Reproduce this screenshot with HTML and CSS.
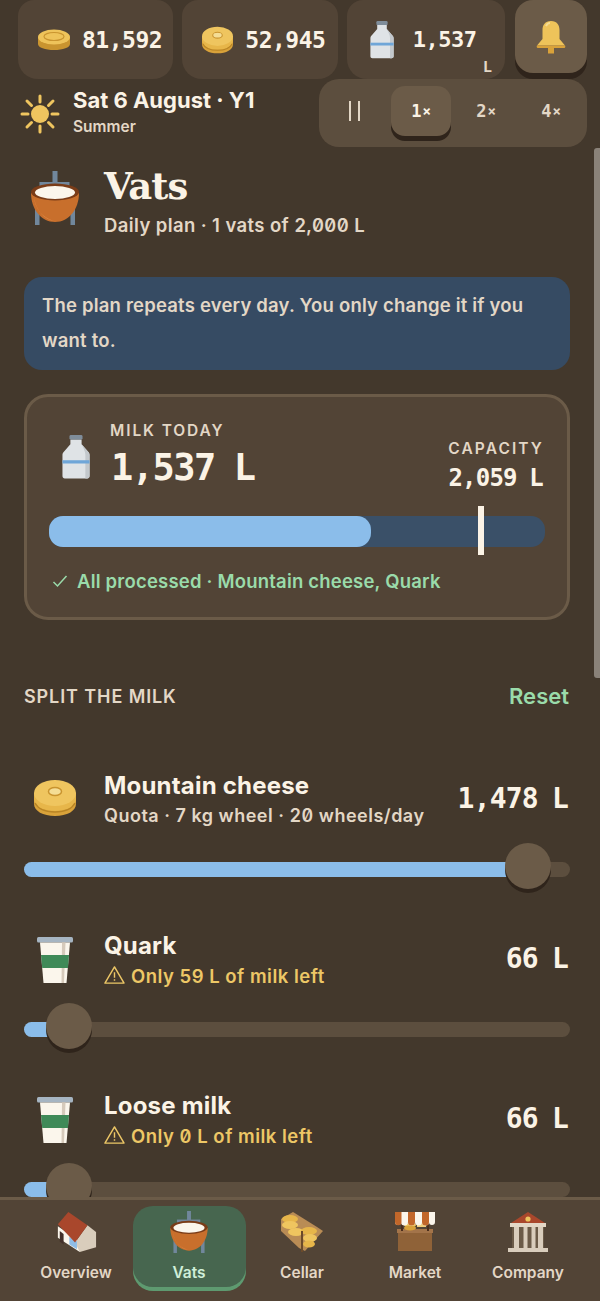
FILE: index.html
```html
<!DOCTYPE html>
<html lang="en">
<head>
<meta charset="utf-8">
<title>Vats</title>
<link rel="stylesheet" href="styles.css">
</head>
<body>
<svg class="defs" width="0" height="0" aria-hidden="true">
  <symbol id="i-coin" viewBox="0 0 32 22">
    <path d="M0 8v7c0 3.500 7 6 16 6s16-2.500 16-6V8z" fill="#c9942f"/>
    <ellipse cx="16" cy="8" rx="16" ry="7.500" fill="#eec35a"/>
    <ellipse cx="16" cy="7.500" rx="10" ry="4" fill="none" stroke="#c9942f" stroke-width="1.200"/>
  </symbol>
  <symbol id="i-cheese" viewBox="0 0 42 38">
    <path d="M0 14v11c0 7 9 12 21 12s21-5 21-12V14z" fill="#d9a23a"/>
    <path d="M0 14v6c0 7 9 12 21 12s21-5 21-12v-6z" fill="#e7b64a"/>
    <path d="M1 24c3 6 11 9 20 9s17-3 20-9" fill="none" stroke="#b98525" stroke-width="1.500"/>
    <ellipse cx="21" cy="14" rx="21" ry="13" fill="#efc55f"/>
    <ellipse cx="21" cy="12.500" rx="6.500" ry="4" fill="#f4dd95" stroke="#c9942f" stroke-width="1.500"/>
  </symbol>
  <symbol id="i-bottle" viewBox="0 0 30 48">
    <rect x="8" y="1" width="14" height="5" rx="1.500" fill="#7f8d9a"/>
    <path d="M9 6h12v5l7 8c1 1 1.500 2 1.500 3.500V45c0 1.500-1 2.500-2.500 2.500H3C1.500 47.500.5 46.500.5 45V22.500C.5 21 1 20 2 19l7-8z" fill="#dfe3e6"/>
    <path d="M21 11l7 8c1 1 1.500 2 1.500 3.500V45c0 1.500-1 2.500-2.500 2.500h-2V22c0-3-2-7-4-11z" fill="#c3c8cc"/>
    <rect x=".5" y="28" width="29" height="3.500" fill="#6fa6d8"/>
  </symbol>
  <symbol id="i-vat" viewBox="0 0 48 54">
    <rect x="21.500" y="0" width="5" height="16" fill="#71879c"/>
    <rect x="8.500" y="11" width="30" height="5" fill="#71879c"/>
    <path d="M4 30h4.500v24H4zM39.500 30H44v24h-4.500z" fill="#71879c"/>
    <path d="M0 22c0 16 10 29 24 29s24-13 24-29z" fill="#c86f2c"/>
    <path d="M3 26c1 11 7 20 20 24-9-1-18-10-20-24z" fill="#e08a46"/>
    <ellipse cx="24" cy="21" rx="24" ry="8.500" fill="#7a3c18"/>
    <ellipse cx="24" cy="21.500" rx="20" ry="6.500" fill="#fbf6ec"/>
  </symbol>
  <symbol id="i-cup" viewBox="0 0 36 46">
    <rect x="0" y="0" width="36" height="5.500" rx="1.500" fill="#a6b5c2"/>
    <path d="M3 5.500h30L29.500 46h-23z" fill="#fbf6ec"/>
    <path d="M25 5.500h3.500L27 46h-2.500z" fill="#d6cabb"/>
    <path d="M4 18h28l-1 13H5.200z" fill="#3f8a58"/>
  </symbol>
</svg>

<div class="app">
  <header class="top">
    <div class="stats">
      <div class="stat">
        <svg class="ic-coin"><use href="#i-coin"/></svg>
        <span class="stat-num">81,592</span>
      </div>
      <div class="stat">
        <svg class="ic-cheese-s"><use href="#i-cheese"/></svg>
        <span class="stat-num">52,945</span>
      </div>
      <div class="stat stat-milk">
        <svg class="ic-bottle-s"><use href="#i-bottle"/></svg>
        <span class="stat-num stat-num-s">1,537</span>
        <span class="unit">L</span>
      </div>
      <button class="bell" aria-label="Notifications">
        <svg class="ic-bell" viewBox="0 0 30 34">
          <path d="M15 1C9 1 6.500 5 6.500 10v9L1 25.500h28L23.500 19v-9C23.500 5 21 1 15 1z" fill="#eec35a"/>
          <path d="M1 25.500h28c.5 0 .5 2.500-.5 2.500h-27c-1 0-1-2.500-.5-2.500z" fill="#d9a23a"/>
          <rect x="12" y="28" width="6" height="5.500" fill="#d9a23a"/>
          <path d="M10 6c1-2 2-3 4-3" stroke="#f6dd94" stroke-width="2" fill="none"/>
        </svg>
      </button>
    </div>
    <div class="dateline">
      <div class="date">
        <svg class="ic-sun" viewBox="0 0 40 40">
          <g stroke="#efc55f" stroke-width="3" stroke-linecap="round">
            <path d="M20 2v6M20 32v6M2 20h6M32 20h6M7 7l4.500 4.500M28.500 28.500L33 33M7 33l4.500-4.500M28.500 11.500L33 7"/>
          </g>
          <circle cx="20" cy="20" r="9" fill="#efc55f"/>
        </svg>
        <div class="date-text">
          <div class="date-main">Sat 6 August · Y1</div>
          <div class="date-sub">Summer</div>
        </div>
      </div>
      <div class="speed">
        <button class="sp-btn sp-pause"><span class="pause"></span></button>
        <button class="sp-btn sp-on">1<span class="x">×</span></button>
        <button class="sp-btn sp-off">2<span class="x">×</span></button>
        <button class="sp-btn sp-off">4<span class="x">×</span></button>
      </div>
    </div>
  </header>

  <main class="main">
    <div class="head">
      <svg class="ic-vat"><use href="#i-vat"/></svg>
      <div>
        <h1 class="title">Vats</h1>
        <p class="subtitle">Daily plan · 1 vats of <span class="z">2,000</span> L</p>
      </div>
    </div>

    <div class="info">The plan repeats every day. You only change it if you want to.</div>

    <section class="card">
      <div class="card-top">
        <svg class="ic-bottle"><use href="#i-bottle"/></svg>
        <div class="today">
          <div class="lbl">MILK TODAY</div>
          <div class="big">1,537 L</div>
        </div>
        <div class="cap">
          <div class="lbl lbl-cap">CAPACITY</div>
          <div class="mid">2,059 L</div>
        </div>
      </div>
      <div class="meter">
        <div class="meter-fill" style="width:64.900%"></div>
        <div class="meter-mark"></div>
      </div>
      <div class="ok">
        <svg class="ic-check" viewBox="0 0 16 14"><path d="M1.500 8l4 4L14.500 2" fill="none" stroke="#9adbaa" stroke-width="1.500"/></svg>
        All processed · Mountain cheese, Quark
      </div>
    </section>

    <div class="split">
      <h2 class="split-t">SPLIT THE MILK</h2>
      <span class="reset">Reset</span>
    </div>

    <div class="row row-first">
      <div class="row-head">
        <svg class="ic-cheese"><use href="#i-cheese"/></svg>
        <div class="row-text">
          <div class="row-name">Mountain cheese</div>
          <div class="row-sub">Quota · 7 kg wheel · <span class="z">20</span> wheels/day</div>
        </div>
        <div class="row-val">1,478 L</div>
      </div>
      <div class="slider"><div class="fill" style="width:92%"></div><div class="thumb" style="left:88.100%"></div></div>
    </div>

    <div class="row">
      <div class="row-head">
        <svg class="ic-cup"><use href="#i-cup"/></svg>
        <div class="row-text">
          <div class="row-name">Quark</div>
          <div class="row-warn">
            <svg class="ic-warn" viewBox="0 0 22 20"><path d="M11 1.500L1 18.500h20z" fill="none" stroke="#edc766" stroke-width="1.500" stroke-linejoin="round"/><path d="M11 7v6M11 14.500v1.500" stroke="#edc766" stroke-width="1.500"/></svg>
            <span>Only 59 L of milk left</span>
          </div>
        </div>
        <div class="row-val">66 L</div>
      </div>
      <div class="slider"><div class="fill" style="width:8%"></div><div class="thumb" style="left:4%"></div></div>
    </div>

    <div class="row">
      <div class="row-head">
        <svg class="ic-cup"><use href="#i-cup"/></svg>
        <div class="row-text">
          <div class="row-name">Loose milk</div>
          <div class="row-warn">
            <svg class="ic-warn" viewBox="0 0 22 20"><path d="M11 1.500L1 18.500h20z" fill="none" stroke="#edc766" stroke-width="1.500" stroke-linejoin="round"/><path d="M11 7v6M11 14.500v1.500" stroke="#edc766" stroke-width="1.500"/></svg>
            <span>Only <span class="z">0</span> L of milk left</span>
          </div>
        </div>
        <div class="row-val">66 L</div>
      </div>
      <div class="slider"><div class="fill" style="width:8%"></div><div class="thumb" style="left:4%"></div></div>
    </div>
  </main>

  <nav class="nav">
    <a class="tab">
      <svg class="nav-ic" viewBox="0 0 42 44">
        <path d="M2 16L25 32v11L2 28z" fill="#fbf6ec"/>
        <path d="M33 15l9 7v16l-17 5-5-10z" fill="#d9cdbc"/>
        <path d="M4 21l4 3v11l-4-3z" fill="#43302a"/>
        <path d="M14 27l8 5v8l-8-5z" fill="#8fbde6"/>
        <path d="M13 1L33 15 20 33 2 14z" fill="#a9472c"/>
      </svg>
      <span>Overview</span>
    </a>
    <a class="tab tab-on">
      <svg class="nav-ic"><use href="#i-vat"/></svg>
      <span>Vats</span>
    </a>
    <a class="tab">
      <svg class="nav-ic" viewBox="0 0 42 42">
        <path d="M0 8L12 1l24 15 6 4-18 20-6-3L0 20z" fill="#b98c55"/>
        <ellipse cx="9" cy="8" rx="8" ry="4" fill="#e7b64a"/>
        <ellipse cx="9" cy="14" rx="8" ry="4" fill="#efc55f"/>
        <ellipse cx="15" cy="21" rx="8" ry="4" fill="#efc55f"/>
        <ellipse cx="28" cy="20" rx="8" ry="4" fill="#e7b64a"/>
        <ellipse cx="29" cy="27" rx="7" ry="4" fill="#efc55f"/>
        <ellipse cx="28" cy="33" rx="6" ry="3.500" fill="#e7b64a"/>
        <path d="M21 20v21" stroke="#6b4a2a" stroke-width="2"/>
      </svg>
      <span>Cellar</span>
    </a>
    <a class="tab">
      <svg class="nav-ic" viewBox="0 0 42 42">
        <path d="M4 18h34v22H4z" fill="#8f6238"/>
        <path d="M3 18h36v4H3z" fill="#a3744a"/>
        <path d="M7 10h2v10H7zM33 10h2v10h-2z" fill="#4a2d1c"/>
        <ellipse cx="16" cy="14" rx="6" ry="2.500" fill="#efc55f"/>
        <ellipse cx="16" cy="17" rx="6" ry="2.500" fill="#d9a23a"/>
        <path d="M23 11h9v5h-9z" fill="#f1cf7c"/>
        <path d="M1 1h40v10a3 3 0 0 1-6 0 3.500 3.500 0 0 1-7 0 3.500 3.500 0 0 1-7 0 3.500 3.500 0 0 1-7 0 3.500 3.500 0 0 1-7 0 3 3 0 0 1-6 0z" fill="#fbf6ec"/>
        <path d="M1 1h6.500v10a3.200 3.200 0 0 1-6.500 0zM14 1h7v10a3.500 3.500 0 0 1-7 0zM28 1h7v10a3.500 3.500 0 0 1-7 0z" fill="#c2672a"/>
      </svg>
      <span>Market</span>
    </a>
    <a class="tab">
      <svg class="nav-ic" viewBox="0 0 42 42">
        <path d="M21 1L38 12H4z" fill="#a9472c"/>
        <circle cx="21" cy="8" r="2.600" fill="#efc55f"/>
        <rect x="3" y="12" width="36" height="4" fill="#e3d7c6"/>
        <rect x="5" y="16" width="32" height="21" fill="#6b5b48"/>
        <path d="M7 16h5v21H7zM16.500 16h4v21h-4zM24.500 16h4v21h-4zM31 16h5v21h-5z" fill="#d9cdbc"/>
        <rect x="1" y="37" width="40" height="4" fill="#d9cdbc"/>
      </svg>
      <span>Company</span>
    </a>
  </nav>

  <div class="scrollbar"></div>
</div>
</body>
</html>
```

FILE: styles.css
```css
* { box-sizing: border-box; }
html, body { margin: 0; height: 100%; }
body {
  background: #43382c;
  font-family: "Inter", "Liberation Sans", sans-serif;
  color: #fbf3e6;
  overflow: hidden;
}
.defs { position: absolute; }
.app { height: 1301px; width: 600px; display: flex; flex-direction: column; position: relative; overflow: hidden; }

/* top */
.top { height: 147px; flex: none; }
.stats { display: flex; gap: 9px; padding: 0 13px 0 18px; height: 79px; }
.stat {
  flex: 1; height: 79px; background: #524436; border-radius: 16px 16px 20px 20px;
  display: flex; align-items: center; gap: 12px; padding-left: 20px; position: relative;
}
.stat-milk { padding-left: 23px; }
.stat-num { font-family: "DejaVu Sans Mono", monospace; font-weight: 700; font-size: 23px; letter-spacing: -.5px; color: #fbf3e6; }
.stat-num-s { margin-left: 7px; font-size: 22px; }
.unit { position: absolute; right: 13px; bottom: 3px; font-size: 15px; font-weight: 700; color: #e3d7c6; }
.ic-coin { width: 32px; height: 22px; }
.ic-cheese-s { width: 31px; height: 28px; }
.ic-bottle-s { width: 24px; height: 39px; }
.bell {
  flex: none; width: 72px; height: 73px; margin-left: 1px; border: 0; padding: 0; background: #6b5b48;
  border-radius: 18px; box-shadow: 0 6px 0 #2f241b; display: flex; align-items: center; justify-content: center;
}
.ic-bell { width: 30px; height: 34px; }
.dateline { display: flex; justify-content: space-between; padding: 0 13px 0 20px; }
.date { display: flex; gap: 13px; align-items: center; height: 68px; }
.ic-sun { width: 40px; height: 40px; margin-top: 2px; }
.date-main { font-size: 22px; font-weight: 700; line-height: 26px; }
.date-sub { font-size: 15.500px; font-weight: 600; color: #e3d7c6; line-height: 24px; margin-top: 2px; }
.speed {
  width: 268px; height: 68px; background: #5c4e3e; border-radius: 20px;
  display: grid; grid-template-columns: 66px 60px 1fr 1fr; align-items: center; padding: 6px;
}
.sp-btn {
  background: none; border: 0; padding: 0; height: 50px; margin-top: -4px; font-family: "DejaVu Sans Mono", monospace; font-weight: 700; font-size: 17px;
  color: #e3d7c6; display: flex; align-items: center; justify-content: center;
}
.x { font-size: 14px; margin-left: 1px; }
.sp-pause { padding-right: 8px; }
.sp-off { padding-left: 5px; }
.sp-on { background: #6b5b48; border-radius: 14px; box-shadow: 0 5px 0 #2f241b; color: #fbf3e6; }
.pause { width: 11px; height: 20px; border-left: 2px solid #e3d7c6; border-right: 2px solid #e3d7c6; }

/* main */
.main { flex: 1; min-height: 0; overflow: hidden; padding: 0 30px 0 24px; width: 600px; }
.head { display: flex; gap: 25px; padding: 18px 0 0 7px; height: 130px; }
.ic-vat { width: 48px; height: 54px; margin-top: 6px; flex: none; }
.title { margin: 0; font-family: "DejaVu Serif", "Liberation Serif", serif; font-weight: 700; font-size: 37px; line-height: 42px; letter-spacing: -1px; }
.subtitle { margin: 6px 0 0; font-size: 18.500px; font-weight: 600; letter-spacing: .4px; color: #e3d7c6; line-height: 24px; }
.z { font-feature-settings: "zero", "tnum"; }
.info {
  background: #364b63; border-radius: 18px; padding: 11px 18px; font-size: 18.500px; font-weight: 600; letter-spacing: .2px; line-height: 35px;
  color: #e3d7c6; height: 93px; width: 546px;
}
.card {
  width: 546px; height: 226px; margin-top: 24px; background: #524436; border: 3px solid #6b5b48; border-radius: 24px;
  padding: 22px 22px 0 22px;
}
.card-top { display: flex; height: 97px; }
.ic-bottle { width: 28px; height: 47px; margin: 14px 0 0 13px; }
.today { margin-left: 20px; flex: 1; }
.lbl { font-size: 15.500px; font-weight: 600; letter-spacing: 1.900px; color: #e3d7c6; line-height: 24px; }
.lbl-cap { letter-spacing: 2.100px; margin-right: -1px; }
.big { font-family: "DejaVu Sans Mono", monospace; font-weight: 700; font-size: 37px; line-height: 50px; letter-spacing: -1.500px; word-spacing: -2px; margin-top: 0; padding-left: 1px; }
.cap { text-align: right; padding-top: 18px; padding-right: 2px; }
.mid { font-family: "DejaVu Sans Mono", monospace; font-weight: 700; font-size: 24px; line-height: 34px; letter-spacing: -.8px; word-spacing: -1px; margin-top: 0; }
.meter { height: 31px; border-radius: 14px; background: #3a5068; position: relative; }
.meter-fill { height: 31px; border-radius: 14px; background: #8bbdea; }
.meter-mark { position: absolute; left: 429px; top: -10px; width: 6px; height: 49px; background: #fbf3e6; }
.ok { display: flex; align-items: center; gap: 9px; margin: 21px 0 0 3px; font-size: 18.500px; font-weight: 600; letter-spacing: .2px; color: #9adbaa; line-height: 26px; }
.ic-check { width: 16px; height: 14px; }

.split { display: flex; justify-content: space-between; align-items: center; margin-top: 63px; height: 26px; width: 546px; }
.split-t { margin: 0; font-size: 18px; font-weight: 600; color: #e3d7c6; letter-spacing: .9px; }
.reset { font-size: 22px; font-weight: 600; color: #9adbaa; margin-right: 1px; }

.row { height: 160px; width: 546px; }
.row-first { margin-top: 55px; }
.row-head { display: flex; height: 98px; align-items: flex-start; padding-top: 6px; }
.ic-cheese { width: 42px; height: 38px; margin: 9px 0 0 10px; flex: none; }
.ic-cup { width: 36px; height: 46px; margin: 7px 0 0 13px; flex: none; }
.row-text { flex: 1; padding-left: 28px; }
.row-head .ic-cup + .row-text { padding-left: 31px; }
.row-name { font-size: 24px; font-weight: 700; line-height: 31px; letter-spacing: .2px; }
.row-sub { font-size: 18px; font-weight: 600; letter-spacing: .5px; color: #e3d7c6; line-height: 30px; }
.row-warn { font-size: 18.500px; font-weight: 600; letter-spacing: .5px; color: #edc766; line-height: 30px; display: flex; align-items: center; gap: 6px; }
.ic-warn { width: 21px; height: 20px; margin-top: -3px; flex: none; }
.row-val { font-family: "DejaVu Sans Mono", monospace; font-weight: 700; font-size: 28px; line-height: 36px; letter-spacing: -.8px; word-spacing: -2px; margin: 11px 2px 0 0; }
.slider { height: 15px; border-radius: 8px; background: #5c4e3e; position: relative; }
.fill { height: 15px; border-radius: 8px; background: #8bbdea; }
.thumb { position: absolute; top: -19px; width: 46px; height: 46px; border-radius: 50%; background: #6b5b48; box-shadow: 0 4px 0 #2f241b; }

/* nav */
.nav {
  flex: none; height: 104px; background: #524436; border-top: 3px solid #6b5b48;
  display: grid; grid-template-columns: repeat(5, 113px); padding: 6px 0 0 19.500px;
  position: relative;
}
.tab { display: flex; flex-direction: column; align-items: center; height: 81px; padding-top: 5px; font-size: 15.500px; font-weight: 600; color: #e3d7c6; border-radius: 20px; }
.tab span { margin-top: 10px; line-height: 20px; }
.tab-on { background: #47664f; box-shadow: 0 4px 0 #5e9a70; color: #cfeed8; }
.nav-ic { width: 42px; height: 42px; }
.scrollbar { position: absolute; right: 0; top: 148px; width: 6px; height: 530px; background: #8a8279; border-radius: 3px 0 0 3px; }
```
